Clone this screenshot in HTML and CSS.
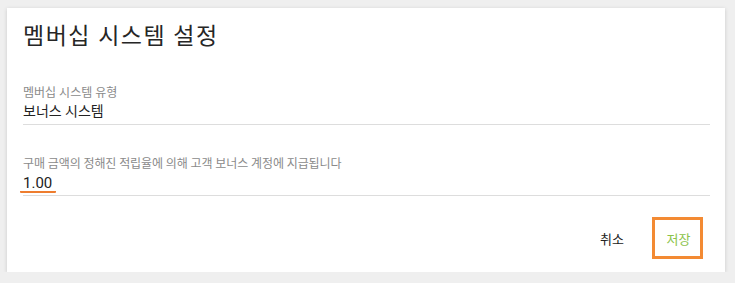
FILE: index.html
```html
<!DOCTYPE html>
<html lang="ko">
<head>
<meta charset="utf-8">
<title>멤버십 시스템 설정</title>
<link rel="stylesheet" href="styles.css">
</head>
<body>
<div class="card">
  <h1 class="title">멤버십 시스템 설정</h1>
  <div class="field field-first">
    <div class="label">멤버십 시스템 유형</div>
    <div class="value">보너스 시스템</div>
  </div>
  <div class="field field-second">
    <div class="label label-long">구매 금액의 정해진 적립율에 의해 고객 보너스 계정에 지급됩니다</div>
    <div class="value-num"><span class="num">1.00</span></div>
  </div>
  <div class="actions">
    <button class="btn btn-cancel" type="button">취소</button>
    <button class="btn btn-save" type="button">저장</button>
  </div>
</div>
</body>
</html>
```
FILE: styles.css
```css
html, body {
  margin: 0;
  padding: 0;
  background: #efefef;
}
body {
  padding: 8px 10px 0 7px;
  font-family: Roboto, "Noto Sans CJK KR", sans-serif;
}
.card {
  height: 264px;
  box-sizing: border-box;
  background: #ffffff;
  box-shadow: 0 1px 4px rgba(0, 0, 0, 0.16);
  padding: 16px 15px 0 16px;
  display: flex;
  flex-direction: column;
}
.title {
  margin: 0;
  font-size: 23px;
  line-height: 26px;
  letter-spacing: 1.5px;
  font-weight: 400;
  color: #262626;
}
.field {
  border-bottom: 1px solid #dddddd;
}
.field-first {
  margin-top: 36px;
}
.field-second {
  margin-top: 32px;
}
.label {
  font-size: 12px;
  line-height: 14px;
  color: #8a8a8a;
}
.label-long {
  letter-spacing: -0.1px;
}
.value {
  font-size: 14px;
  line-height: 18px;
  color: #222222;
  padding: 2px 0 4px;
}
.value-num {
  font-size: 15px;
  color: #222222;
  padding: 5px 0 2px;
}
.num {
  display: block;
  width: fit-content;
  margin-left: -3px;
  padding: 0 4px 0 3px;
  border-bottom: 2px solid #ee7d2f;
  border-radius: 1px;
  line-height: 15px;
}
.actions {
  margin-top: 21px;
  display: flex;
  justify-content: flex-end;
  align-items: center;
  padding-right: 7px;
}
.btn {
  font-family: Roboto, "Noto Sans CJK KR", sans-serif;
  font-size: 13px;
  background: transparent;
  border: 0;
  padding: 0;
  cursor: pointer;
}
.btn-cancel {
  color: #222222;
  margin-right: 28px;
  height: 42px;
}
.btn-save {
  color: #8bc34a;
  width: 51px;
  height: 42px;
  box-sizing: border-box;
  border: 3px solid #f38a33;
  padding-left: 2px;
}
```
